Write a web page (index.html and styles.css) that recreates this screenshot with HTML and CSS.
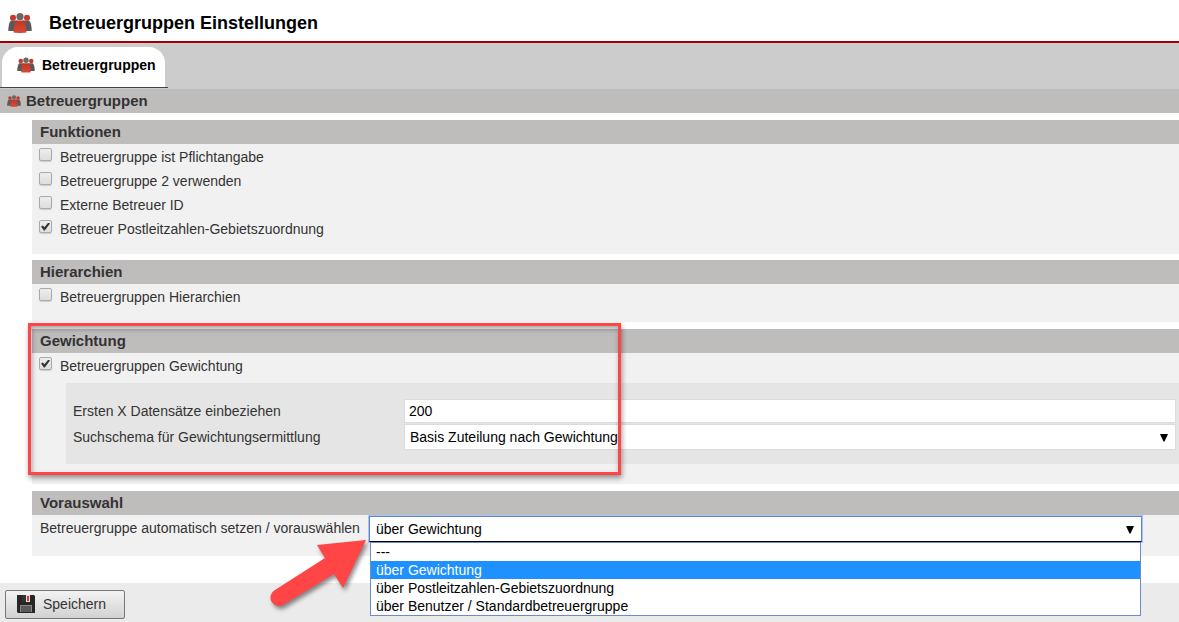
FILE: index.html
```html
<!DOCTYPE html>
<html lang="de">
<head>
<meta charset="utf-8">
<title>Betreuergruppen Einstellungen</title>
<link rel="stylesheet" href="styles.css">
</head>
<body>
<svg class="defs" width="0" height="0" aria-hidden="true">
  <defs>
    <linearGradient id="red" x1="0" y1="0" x2="0" y2="1"><stop offset="0" stop-color="#c23524"/><stop offset="1" stop-color="#d84a38"/></linearGradient>
    <symbol id="group" viewBox="0 0 24 20">
      <path d="M3 7.500h6L7 18H.3C.3 14 1 9 3 7.500z" fill="#5a5a5a"/>
      <path d="M21 7.500h-6l2 10.500h6.700C23.700 14 23 9 21 7.500z" fill="#5a5a5a"/>
      <circle cx="5" cy="4.700" r="3" fill="#c4392a"/>
      <circle cx="19" cy="4.700" r="3" fill="#c4392a"/>
      <path d="M8.500 7.500h7c2 1 2.800 7.500 2.900 12-3 .6-9.800.6-12.800 0 .1-4.500.9-11 2.900-12z" fill="url(#red)"/>
      <circle cx="12" cy="3.700" r="3.600" fill="#686868"/>
    </symbol>
  </defs>
</svg>

<header class="page-header">
  <svg class="icon-large" aria-hidden="true"><use href="#group"/></svg>
  <h1>Betreuergruppen Einstellungen</h1>
</header>

<nav class="tabs">
  <div class="tab-slot">
    <button type="button" class="tab">
      <svg class="icon-medium" aria-hidden="true"><use href="#group"/></svg>
      Betreuergruppen
    </button>
  </div>
</nav>

<main>
  <h2 class="bar page-bar">
    <svg class="icon-small" aria-hidden="true"><use href="#group"/></svg>
    Betreuergruppen
  </h2>

  <form class="sections" id="settings">
    <section>
      <h3 class="bar">Funktionen</h3>
      <div class="body">
        <label class="check"><input type="checkbox"><span>Betreuergruppe ist Pflichtangabe</span></label>
        <label class="check"><input type="checkbox"><span>Betreuergruppe 2 verwenden</span></label>
        <label class="check"><input type="checkbox"><span>Externe Betreuer ID</span></label>
        <label class="check"><input type="checkbox" checked><span>Betreuer Postleitzahlen-Gebietszuordnung</span></label>
      </div>
    </section>

    <section>
      <h3 class="bar">Hierarchien</h3>
      <div class="body">
        <label class="check"><input type="checkbox"><span>Betreuergruppen Hierarchien</span></label>
      </div>
    </section>

    <section class="weighting">
      <h3 class="bar">Gewichtung</h3>
      <div class="body">
        <label class="check"><input type="checkbox" checked><span>Betreuergruppen Gewichtung</span></label>
        <div class="panel">
          <label for="count">Ersten X Datensätze einbeziehen</label>
          <input id="count" class="field" type="text" value="200">
          <label for="scheme">Suchschema für Gewichtungsermittlung</label>
          <div class="select">
            <select id="scheme" class="field"><option>Basis Zuteilung nach Gewichtung</option></select>
            <svg class="caret" viewBox="0 0 8 8" aria-hidden="true"><path d="M0 0h8L4.500 7.500h-1z"/></svg>
          </div>
        </div>
      </div>
      <div class="highlight"></div>
    </section>

    <section>
      <h3 class="bar">Vorauswahl</h3>
      <div class="body preset">
        <label for="preset">Betreuergruppe automatisch setzen / vorauswählen</label>
        <div class="select open">
          <select id="preset" class="field"><option>über Gewichtung</option></select>
          <svg class="caret" viewBox="0 0 8 8" aria-hidden="true"><path d="M0 0h8L4.500 7.500h-1z"/></svg>
          <ul class="options" role="listbox" aria-label="Vorauswahl">
            <li role="option">---</li>
            <li role="option" class="active" aria-selected="true">über Gewichtung</li>
            <li role="option">über Postleitzahlen-Gebietszuordnung</li>
            <li role="option">über Benutzer / Standardbetreuergruppe</li>
          </ul>
          <svg class="arrow" viewBox="0 0 110 80" aria-hidden="true">
            <path d="M101 8L52 13l8 13L10 58a8.500 8.500 0 0 0 8 15l51-31 9 14z"/>
          </svg>
        </div>
      </div>
    </section>
  </form>
</main>

<footer>
  <button type="submit" form="settings" class="save">
    <svg class="icon-disk" viewBox="0 0 18 18" aria-hidden="true">
      <path d="M0 0h17l1 1v17H1l-1-1z" fill="#262626"/>
      <path d="M5 0h8v7H5z" fill="#e0e0e0"/>
      <path d="M5 0h4v7H5z" fill="#333"/>
      <path d="M10 1h2v5h-2z" fill="#d8392a"/>
      <path d="M3 10h12v7H3z" fill="#888"/>
      <path d="M4 11h10v6H4z" fill="#5a5a5a"/>
    </svg>
    Speichern
  </button>
</footer>
</body>
</html>
```
FILE: styles.css
```css
* { box-sizing: border-box; }

body {
  margin: 0;
  min-height: 100vh;
  display: flex;
  flex-direction: column;
  overflow: hidden;
  background: #fff;
  color: #333;
  font: 14px/18px "Liberation Sans", Arial, sans-serif;
}

.defs { position: absolute; }

h1, h2, h3, ul { margin: 0; padding: 0; }

button, input, select { font: inherit; }

.page-header {
  display: flex;
  align-items: center;
  gap: 17px;
  padding: 9px 8px 4px;
  border-bottom: 2px solid #a00000;
}

h1 {
  color: #000;
  font-size: 18px;
  line-height: 28px;
}

.icon-large { width: 24px; height: 20px; }
.icon-medium { width: 18px; height: 16px; }
.icon-small { width: 14px; height: 12px; }

.tabs {
  display: flex;
  padding: 4px 0 1px;
  background: #ccc;
}

.tab-slot {
  padding: 0 3px 0 2px;
  border-bottom: 1px solid #444;
}

.tab {
  display: flex;
  align-items: center;
  gap: 7px;
  padding: 9px 9px 13px 15px;
  border: 0;
  border-radius: 16px 16px 0 0;
  background: #fff;
  color: #000;
  font-weight: bold;
}

.bar {
  padding: 3px 8px;
  background: #bfbcbc;
  color: #333;
  font-size: 15px;
  line-height: 18px;
}

.page-bar {
  display: flex;
  align-items: center;
  gap: 5px;
  padding: 3px 7px;
}

.sections {
  display: flex;
  flex-direction: column;
  gap: 6px;
  padding: 7px 0 27px 32px;
}

.body {
  padding-bottom: 14px;
  background: #f1f1f1;
}

.check {
  display: flex;
  align-items: flex-start;
  gap: 8px;
  padding: 4px 7px 2px;
}

.check span { padding-top: 1px; line-height: 17px; }

.check input {
  appearance: none;
  display: grid;
  place-items: center;
  width: 13px;
  height: 13px;
  margin: 0;
  border: 1px solid #aaa;
  border-radius: 2px;
  background: linear-gradient(#eee, #ddd);
  box-shadow: 0 1px 1px #ccc;
}

.check input:checked::before {
  content: "";
  width: 9px;
  height: 8px;
  background: #333;
  clip-path: polygon(0 50%, 20% 38%, 38% 60%, 82% 0, 100% 14%, 42% 100%, 32% 100%);
}

.weighting {
  position: relative;
  margin: 1px 0;
}

.weighting .body { padding-bottom: 20px; }

.panel {
  display: grid;
  grid-template-columns: 324px 1fr;
  column-gap: 7px;
  row-gap: 1px;
  align-items: center;
  margin: 6px 0 0 34px;
  padding: 16px 3px 14px 7px;
  background: #e5e5e5;
}

.field {
  display: block;
  width: 100%;
  height: 24px;
  margin: 0;
  padding: 0 4px;
  border: 1px solid #dcdcdc;
  border-radius: 0;
  background: #fff;
  color: #000;
}

.select { position: relative; }

.select .field {
  appearance: none;
  height: 26px;
  padding: 0 5px;
}

.caret {
  position: absolute;
  top: 10px;
  right: 8px;
  width: 8px;
  height: 8px;
}

.highlight {
  position: absolute;
  top: -6px;
  bottom: 9px;
  left: -4px;
  width: 593px;
  border: 3px solid #ff4545;
  box-shadow: 1px 3px 5px rgba(0, 0, 0, .4), inset 1px 3px 5px rgba(0, 0, 0, .35);
  pointer-events: none;
}

.preset {
  display: flex;
  align-items: flex-start;
  padding: 1px 37px 14px 8px;
}

.preset label {
  width: 329px;
  padding-top: 3px;
}

.preset .select { flex: 1; }

.open .field {
  padding: 0 6px;
  border-color: #5b87d0;
  border-bottom-color: #000;
  box-shadow: 0 0 0 1px #a9c3f2;
  outline: 0;
}

.options {
  position: absolute;
  top: 26px;
  right: 1px;
  left: 1px;
  border: 1px solid #6a8cc8;
  background: #fff;
  color: #000;
  list-style: none;
}

.options li {
  padding: 0 5px;
  line-height: 18px;
}

.options .active {
  background: #1e90ff;
  color: #fff;
}

.arrow {
  position: absolute;
  top: 16px;
  left: -104px;
  width: 110px;
  height: 80px;
  overflow: visible;
  fill: #ff4545;
  filter: drop-shadow(2px 3px 2px rgba(0, 0, 0, .45));
  pointer-events: none;
}

footer {
  flex: 1;
  padding: 7px 5px 3px;
  background: #ebebeb;
}

.save {
  display: flex;
  align-items: center;
  gap: 8px;
  padding: 4px 18px 5px 11px;
  border: 1px solid #777;
  border-radius: 2px;
  background: linear-gradient(#f3f3f3, #d2d2d2);
  color: #333;
}

.icon-disk { width: 18px; height: 18px; }
```
